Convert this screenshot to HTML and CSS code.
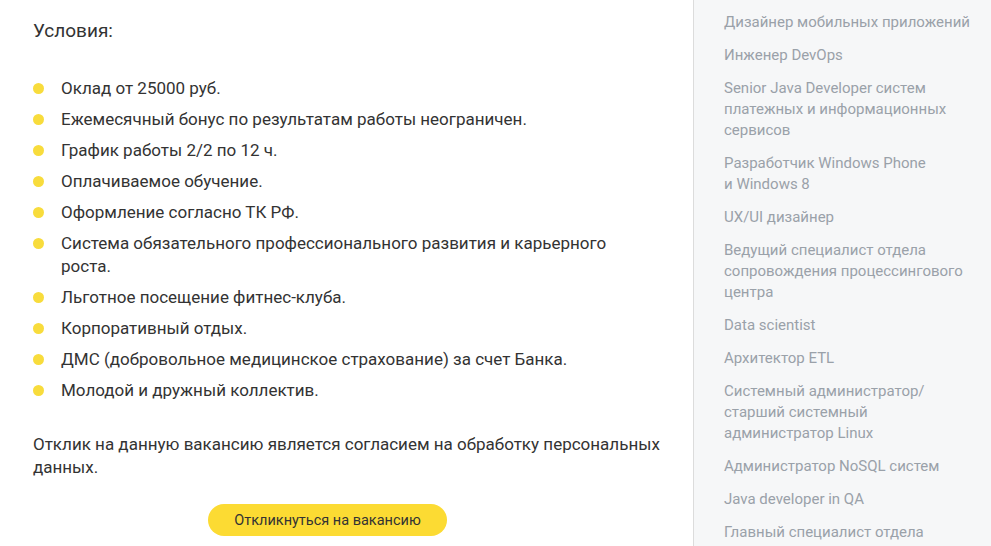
FILE: index.html
```html
<!DOCTYPE html>
<html lang="ru">
<head>
<meta charset="utf-8">
<link rel="stylesheet" href="styles.css">
</head>
<body>
<div class="page">
  <main class="content">
    <h2 class="title">Условия:</h2>
    <ul class="list">
      <li>Оклад от 25000 руб.</li>
      <li>Ежемесячный бонус по результатам работы неограничен.</li>
      <li>График работы 2/2 по 12 ч.</li>
      <li>Оплачиваемое обучение.</li>
      <li>Оформление согласно ТК РФ.</li>
      <li>Система обязательного профессионального развития и карьерного роста.</li>
      <li>Льготное посещение фитнес-клуба.</li>
      <li>Корпоративный отдых.</li>
      <li>ДМС (добровольное медицинское страхование) за счет Банка.</li>
      <li>Молодой и дружный коллектив.</li>
    </ul>
    <p class="note">Отклик на данную вакансию является согласием на обработку персональных данных.</p>
    <div class="actions"><button class="btn">Откликнуться на вакансию</button></div>
  </main>
  <aside class="sidebar">
    <a class="link">Дизайнер мобильных приложений</a>
    <a class="link">Инженер DevOps</a>
    <a class="link">Senior Java Developer систем платежных и информационных сервисов</a>
    <a class="link">Разработчик Windows Phone<br>и Windows 8</a>
    <a class="link">UX/UI дизайнер</a>
    <a class="link">Ведущий специалист отдела сопровождения процессингового центра</a>
    <a class="link">Data scientist</a>
    <a class="link">Архитектор ETL</a>
    <a class="link">Системный администратор/ старший системный администратор Linux</a>
    <a class="link">Администратор NoSQL систем</a>
    <a class="link">Java developer in QA</a>
    <a class="link">Главный специалист отдела</a>
  </aside>
</div>
</body>
</html>
```
FILE: styles.css
```css
html, body {
  margin: 0;
  padding: 0;
  background: #fff;
  overflow: hidden;
}
body {
  font-family: "Roboto", "Liberation Sans", sans-serif;
  color: #333;
}
.page {
  display: flex;
  width: 991px;
  height: 546px;
  overflow: hidden;
}
.content {
  width: 693px;
  flex: none;
  box-sizing: border-box;
  padding: 20px 20px 0 33px;
}
.title {
  margin: 0;
  font-size: 19px;
  font-weight: 400;
  line-height: 22px;
}
.list {
  list-style: none;
  margin: 35px 0 0;
  padding: 0;
  display: flex;
  flex-direction: column;
  gap: 8px;
}
.list li {
  position: relative;
  padding-left: 28px;
  font-size: 17px;
  line-height: 23px;
  max-width: 580px;
}
.list li::before {
  content: "";
  position: absolute;
  left: 0;
  top: 6px;
  width: 11px;
  height: 11px;
  border-radius: 50%;
  background: #f8dc3c;
}
.note {
  margin: 31px 0 0;
  font-size: 17px;
  line-height: 23px;
  max-width: 640px;
}
.actions {
  margin-top: 25px;
  padding-left: 175px;
}
.btn {
  width: 239px;
  height: 32px;
  border: none;
  border-radius: 16px;
  background: #fcdb33;
  font-family: "Roboto", "Liberation Sans", sans-serif;
  font-size: 14.5px;
  color: #333;
  padding: 0;
}
.sidebar {
  flex: 1;
  background: #f6f7f8;
  border-left: 1px solid #dcdcdc;
  padding: 12px 10px 0 30px;
  display: flex;
  flex-direction: column;
  gap: 12px;
}
.link {
  font-size: 15px;
  line-height: 21px;
  color: #9aa1a9;
  max-width: 250px;
}
```
